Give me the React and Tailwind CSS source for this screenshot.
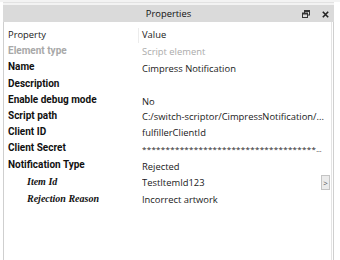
import React from "react";

const rows = [
  { label: "Element type", value: "Script element", muted: true, h: "h-[16px]", vp: "pt-[1px]" },
  { label: "Name", value: "Cimpress Notification", h: "h-[16px]", vp: "pt-[3px]" },
  { label: "Description", value: "", h: "h-[17px]", vp: "" },
  { label: "Enable debug mode", value: "No", h: "h-[16px]", vp: "pt-[2px]" },
  { label: "Script path", value: "C:/switch-scriptor/CimpressNotification/...", h: "h-[16px]", vp: "pt-[1px]" },
  { label: "Client ID", value: "fulfillerClientId", h: "h-[16px]", vp: "pt-[1px]" },
  { label: "Client Secret", value: "", stars: true, h: "h-[16px]", vp: "pt-[2px]" },
  { label: "Notification Type", value: "Rejected", h: "h-[17px]", vp: "pt-[3px]" },
  { label: "Item Id", value: "TestItemId123", sub: true, button: true, h: "h-[18px]", vp: "pt-[1px]" },
  { label: "Rejection Reason", value: "Incorrect artwork", sub: true, h: "h-[16px]", vp: "" },
];

export default function App() {
  return (
    <div className="w-[340px] h-[260px] bg-white overflow-hidden flex flex-col">
      <div className="h-[2px] bg-[#f3f3f3]" />
      <div className="h-[1px] bg-[#e2e2e2] ml-[3px] mr-[6px]" />
      <div className="h-[2px] bg-[#f3f3f3] ml-[3px] mr-[6px]" />
      <div className="ml-[3px] mr-[6px] flex-1 min-w-0 flex flex-col">
        <div className="h-[17px] bg-[#dadada] flex items-center relative">
          <div className="flex-1 text-center text-[9.4px] text-[#111] font-['Open_Sans',sans-serif] leading-[14px]">Properties</div>
          <div className="absolute right-[5px] top-[5px] flex items-center gap-[12px]">
            <svg width="8" height="8" viewBox="0 0 8 8">
              <rect x="2.5" y="0.5" width="5" height="4.5" fill="none" stroke="#333" strokeWidth="1" />
              <rect x="2.5" y="0.5" width="5" height="1.5" fill="#333" />
              <rect x="0.5" y="3" width="5" height="4.5" fill="#dadada" stroke="#333" strokeWidth="1" />
              <rect x="0.5" y="3" width="5" height="1.5" fill="#333" />
            </svg>
            <svg width="7" height="7" viewBox="0 0 7 7">
              <path d="M0.8 0.8 L6.2 6.2 M6.2 0.8 L0.8 6.2" stroke="#222" strokeWidth="1.6" />
            </svg>
          </div>
        </div>
        <div className="flex-1 min-w-0 border-l border-[#cfcfcf] flex">
          <div className="flex-1 min-w-0 flex flex-col pt-[5px] font-['Open_Sans',sans-serif] text-[9.4px] text-[#1a1a1a]">
            <div className="h-[16px] flex items-center">
              <div className="w-[134px] pl-[4px]">Property</div>
              <div className="w-[1px] h-[15px] bg-[#ececec]" />
              <div className="pl-[3px]">Value</div>
            </div>
            {rows.map((r) => (
              <div key={r.label} className={`${r.h} flex min-w-0`}>
                <div
                  className={`w-[135px] shrink-0 flex items-center leading-[14px] whitespace-nowrap ${
                    r.sub
                      ? "pl-[23px] font-['Liberation_Serif',serif] font-bold italic text-[10px] text-[#111]"
                      : `pl-[4px] font-['Roboto',sans-serif] font-bold text-[10px] ${r.muted ? "text-[#a8a8a8]" : "text-[#111]"}`
                  }`}
                >
                  {r.label}
                </div>
                <div className={`flex-1 min-w-0 flex items-center pl-[3px] ${r.vp}`}>
                  {r.stars ? (
                    <div className="flex-1 min-w-0 whitespace-nowrap overflow-hidden leading-[13px] text-[#1a1a1a]">
                      <span className="text-[8px] tracking-[0.3px]">{"*".repeat(37)}</span>
                      <span className="text-[7px]">...</span>
                    </div>
                  ) : (
                    <div
                      className={`flex-1 min-w-0 whitespace-nowrap overflow-hidden text-ellipsis leading-[13px] ${
                        r.muted ? "text-[#ababab]" : "text-[#1a1a1a]"
                      }`}
                    >
                      {r.value}
                    </div>
                  )}
                  {r.button && (
                    <div className="w-[9px] h-[15px] mr-[1px] shrink-0 bg-[#ebebeb] border border-[#c4c4c4] flex items-center justify-center text-[8px] text-[#555] leading-none">
                      &gt;
                    </div>
                  )}
                </div>
              </div>
            ))}
          </div>
          <div className="w-[1px] bg-[#e4e4e4]" />
          <div className="w-[1px] bg-white" />
          <div className="w-[1px] bg-[#cfcfcf]" />
        </div>
      </div>
    </div>
  );
}
